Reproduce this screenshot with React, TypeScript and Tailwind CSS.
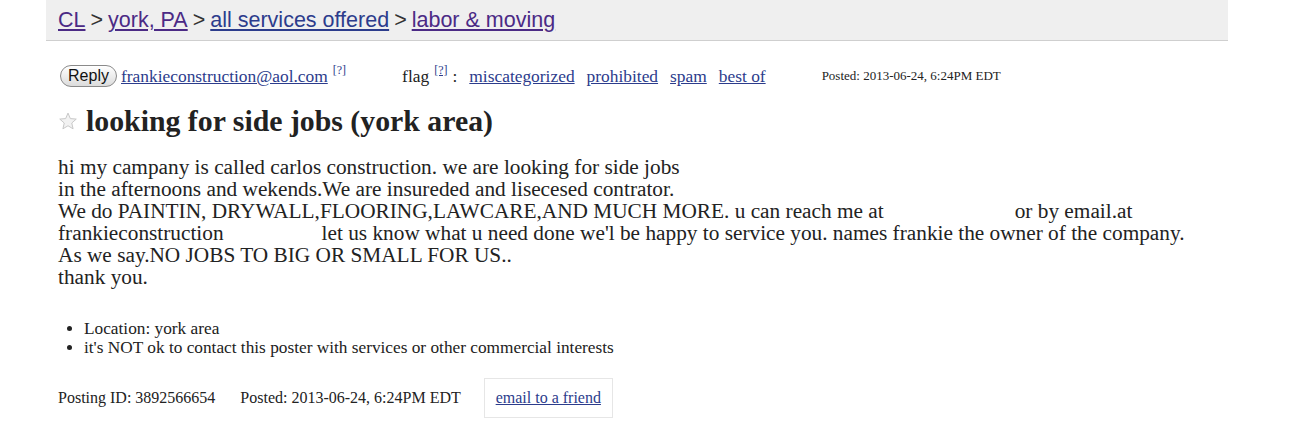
import React from "react";

const serif = "font-['Liberation_Serif','Times_New_Roman',serif]";
const sans = "font-['Liberation_Sans',Arial,sans-serif]";

const Gap = ({ w }: { w: number }) => (
  <span className="inline-block" style={{ width: w }} />
);

function Star() {
  return (
    <svg width={20} height={20} viewBox="0 0 24 24" className="shrink-0">
      <path
        d="M12 2.5l2.8 6.6 7.1.6-5.4 4.7 1.6 7-6.1-3.7-6.1 3.7 1.6-7L2.1 9.7l7.1-.6z"
        fill="#f2f2f2"
        stroke="#c8c8c8"
        strokeWidth={1.2}
        strokeLinejoin="round"
      />
    </svg>
  );
}

export default function App() {
  const visited = "text-[#4b2a85] underline";
  const link = "text-[#2c3c8c] underline";

  return (
    <div className={`w-[1296px] h-[432px] bg-white text-[#222] overflow-hidden ${serif}`}>
      <div className="ml-[46px] w-[1182px]">
        {/* breadcrumbs */}
        <div className={`h-[41px] bg-[#efefef] border-b border-[#cfcfcf] pl-[12px] flex items-center text-[21.5px] text-[#333] ${sans}`}>
          <a className={visited}>CL</a>
          <span className="mx-[5px]">&gt;</span>
          <a className={visited}>york, PA</a>
          <span className="mx-[5px]">&gt;</span>
          <a className={link}>all services offered</a>
          <span className="mx-[5px]">&gt;</span>
          <a className={visited}>labor &amp; moving</a>
        </div>

        <div className="pl-[12px]">
          {/* reply / flag row */}
          <div className="flex items-center h-[24px] mt-[23px] text-[17.4px]">
            <button
              className={`h-[22px] w-[57px] ml-[2px] rounded-[11px] border border-[#8a8a8a] bg-gradient-to-b from-white to-[#dcdcdc] text-[16px] text-[#111] leading-none ${sans}`}
            >
              Reply
            </button>
            <a className={`${link} ml-[4px]`}>frankieconstruction@aol.com</a>
            <sup className="text-[12px] ml-[5px] text-[#2c3c8c]">[?]</sup>
            <span className="ml-[56px]">flag</span>
            <sup className="text-[12px] ml-[5px] text-[#2c3c8c] underline">[?]</sup>
            <span className="ml-[5px]">:</span>
            <a className={`${link} ml-[12px]`}>miscategorized</a>
            <a className={`${link} ml-[12px]`}>prohibited</a>
            <a className={`${link} ml-[12px]`}>spam</a>
            <a className={`${link} ml-[12px]`}>best of</a>
            <span className="ml-[56px] text-[13px]">Posted: 2013-06-24, 6:24PM EDT</span>
          </div>

          {/* title */}
          <div className="flex items-center mt-[16px] h-[34px]">
            <Star />
            <h2 className="ml-[8px] text-[29.8px] font-bold text-[#222] leading-none">
              looking for side jobs (york area)
            </h2>
          </div>

          {/* body */}
          <div className="mt-[18px] text-[21.3px] leading-[22px] text-[#222]">
            <div>hi my campany is called carlos construction. we are looking for side jobs</div>
            <div>in the afternoons and wekends.We are insureded and lisecesed contrator.</div>
            <div>
              We do PAINTIN, DRYWALL,FLOORING,LAWCARE,AND MUCH MORE. u can reach me at
              <Gap w={131} />
              or by email.at
            </div>
            <div>
              frankieconstruction
              <Gap w={98} />
              let us know what u need done we'l be happy to service you. names frankie the owner of the company.
            </div>
            <div>As we say.NO JOBS TO BIG OR SMALL FOR US..</div>
            <div>thank you.</div>
          </div>

          {/* notices */}
          <ul className="mt-[31px] ml-[26px] list-disc text-[17.3px] leading-[19px] text-[#222]">
            <li>Location: york area</li>
            <li>it's NOT ok to contact this poster with services or other commercial interests</li>
          </ul>

          {/* footer */}
          <div className="flex items-center mt-[21px] text-[16px] text-[#222]">
            <span>Posting ID: 3892566654</span>
            <span className="ml-[25px]">Posted: 2013-06-24, 6:24PM EDT</span>
            <div className="ml-[23px] h-[40px] w-[129px] border border-[#e6e6e6] flex items-center justify-center">
              <a className={link}>email to a friend</a>
            </div>
          </div>
        </div>
      </div>
    </div>
  );
}
